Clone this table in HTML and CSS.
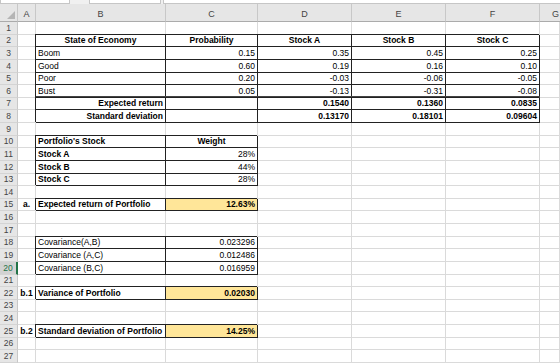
FILE: index.html
```html
<!DOCTYPE html>
<html>
<head>
<meta charset="utf-8">
<link rel="stylesheet" href="styles.css">
</head>
<body>
<div class="topbar">
  <div class="tb namebox"></div>
  <div class="tb fxbox"></div>
  <div class="tb formula"></div>
</div>
<div class="sheet">
  <div class="corner"><svg width="8" height="8" viewBox="0 0 8 8"><polygon points="8,0 8,8 0,8" fill="#b5b5b5"/></svg></div>
  <div class="ch">A</div><div class="ch">B</div><div class="ch">C</div><div class="ch">D</div><div class="ch">E</div><div class="ch">F</div><div class="ch gh">G</div>

  <div class="rh">1</div><div class="c"></div><div class="c"></div><div class="c"></div><div class="c"></div><div class="c"></div><div class="c"></div><div class="c"></div>

  <div class="rh">2</div><div class="c"></div><div class="c bx b ctr">State of Economy</div><div class="c bx b ctr">Probability</div><div class="c bx b ctr">Stock A</div><div class="c bx b ctr">Stock B</div><div class="c bx b ctr">Stock C</div><div class="c"></div>

  <div class="rh">3</div><div class="c"></div><div class="c bx">Boom</div><div class="c bx r">0.15</div><div class="c bx r">0.35</div><div class="c bx r">0.45</div><div class="c bx r">0.25</div><div class="c"></div>

  <div class="rh">4</div><div class="c"></div><div class="c bx">Good</div><div class="c bx r">0.60</div><div class="c bx r">0.19</div><div class="c bx r">0.16</div><div class="c bx r">0.10</div><div class="c"></div>

  <div class="rh">5</div><div class="c"></div><div class="c bx">Poor</div><div class="c bx r">0.20</div><div class="c bx r">-0.03</div><div class="c bx r">-0.06</div><div class="c bx r">-0.05</div><div class="c"></div>

  <div class="rh">6</div><div class="c"></div><div class="c bx">Bust</div><div class="c bx r">0.05</div><div class="c bx r">-0.13</div><div class="c bx r">-0.31</div><div class="c bx r">-0.08</div><div class="c"></div>

  <div class="rh">7</div><div class="c"></div><div class="c bx tk b r">Expected return</div><div class="c bx tk"></div><div class="c bx tk b r">0.1540</div><div class="c bx tk b r">0.1360</div><div class="c bx tk b r">0.0835</div><div class="c"></div>

  <div class="rh">8</div><div class="c"></div><div class="c bx b r">Standard deviation</div><div class="c bx"></div><div class="c bx b r">0.13170</div><div class="c bx b r">0.18101</div><div class="c bx b r">0.09604</div><div class="c"></div>

  <div class="rh">9</div><div class="c"></div><div class="c"></div><div class="c"></div><div class="c"></div><div class="c"></div><div class="c"></div><div class="c"></div>

  <div class="rh">10</div><div class="c"></div><div class="c bx b">Portfolio's Stock</div><div class="c bx b ctr">Weight</div><div class="c"></div><div class="c"></div><div class="c"></div><div class="c"></div>

  <div class="rh">11</div><div class="c"></div><div class="c bx b">Stock A</div><div class="c bx r">28%</div><div class="c"></div><div class="c"></div><div class="c"></div><div class="c"></div>

  <div class="rh">12</div><div class="c"></div><div class="c bx b">Stock B</div><div class="c bx r">44%</div><div class="c"></div><div class="c"></div><div class="c"></div><div class="c"></div>

  <div class="rh">13</div><div class="c"></div><div class="c bx b">Stock C</div><div class="c bx r">28%</div><div class="c"></div><div class="c"></div><div class="c"></div><div class="c"></div>

  <div class="rh">14</div><div class="c"></div><div class="c"></div><div class="c"></div><div class="c"></div><div class="c"></div><div class="c"></div><div class="c"></div>

  <div class="rh">15</div><div class="c b ctr">a.</div><div class="c bx b">Expected return of Portfolio</div><div class="c bx y b r">12.63%</div><div class="c"></div><div class="c"></div><div class="c"></div><div class="c"></div>

  <div class="rh">16</div><div class="c"></div><div class="c"></div><div class="c"></div><div class="c"></div><div class="c"></div><div class="c"></div><div class="c"></div>

  <div class="rh">17</div><div class="c"></div><div class="c"></div><div class="c"></div><div class="c"></div><div class="c"></div><div class="c"></div><div class="c"></div>

  <div class="rh">18</div><div class="c"></div><div class="c bx">Covariance(A,B)</div><div class="c bx r">0.023296</div><div class="c"></div><div class="c"></div><div class="c"></div><div class="c"></div>

  <div class="rh">19</div><div class="c"></div><div class="c bx">Covariance (A,C)</div><div class="c bx r">0.012486</div><div class="c"></div><div class="c"></div><div class="c"></div><div class="c"></div>

  <div class="rh sel">20</div><div class="c"></div><div class="c bx">Covariance (B,C)</div><div class="c bx r">0.016959</div><div class="c"></div><div class="c"></div><div class="c"></div><div class="c"></div>

  <div class="rh">21</div><div class="c"></div><div class="c"></div><div class="c"></div><div class="c"></div><div class="c"></div><div class="c"></div><div class="c"></div>

  <div class="rh">22</div><div class="c b ctr">b.1</div><div class="c bx b">Variance of Portfolio</div><div class="c bx y b r">0.02030</div><div class="c"></div><div class="c"></div><div class="c"></div><div class="c"></div>

  <div class="rh">23</div><div class="c"></div><div class="c"></div><div class="c"></div><div class="c"></div><div class="c"></div><div class="c"></div><div class="c"></div>

  <div class="rh">24</div><div class="c"></div><div class="c"></div><div class="c"></div><div class="c"></div><div class="c"></div><div class="c"></div><div class="c"></div>

  <div class="rh">25</div><div class="c b ctr">b.2</div><div class="c bx b">Standard deviation of Portfolio</div><div class="c bx y b r">14.25%</div><div class="c"></div><div class="c"></div><div class="c"></div><div class="c"></div>

  <div class="rh">26</div><div class="c"></div><div class="c"></div><div class="c"></div><div class="c"></div><div class="c"></div><div class="c"></div><div class="c"></div>

  <div class="rh">27</div><div class="c"></div><div class="c"></div><div class="c"></div><div class="c"></div><div class="c"></div><div class="c"></div><div class="c"></div>
</div>
</body>
</html>
```
FILE: styles.css
```css
* { box-sizing: border-box; }
html, body { margin: 0; padding: 0; background: #fff; }
body {
  font-family: "Liberation Sans", Arial, sans-serif;
  color: #000;
  width: 560px;
  height: 364px;
  overflow: hidden;
}
.topbar {
  height: 4px;
  background: #f0f0f0;
  display: flex;
}
.tb {
  height: 4px;
  background: #fff;
  border: 1px solid #c6c6c6;
  border-top: none;
}
.namebox { width: 70px; }
.fxbox { width: 72px; margin-left: 19px; }
.formula { flex: 1; margin-left: 2px; border-right: none; }

.sheet {
  display: grid;
  grid-template-columns: 18px 18px 130px 92px 94px 94px 94px 20px;
  grid-template-rows: 18px repeat(27, 12.64px);
  overflow: hidden;
}
.corner {
  background: #e6e6e6;
  border-right: 1px solid #c8c8c8;
  border-bottom: 1px solid #ababab;
  display: flex;
  align-items: flex-end;
  justify-content: flex-end;
  padding: 0 2px 2px 0;
}
.ch {
  background: #e6e6e6;
  border-right: 1px solid #c8c8c8;
  border-bottom: 1px solid #ababab;
  color: #444;
  font-size: 9px;
  display: flex;
  align-items: center;
  justify-content: center;
  padding-top: 2px;
}
.ch.gh { justify-content: flex-start; padding-left: 12px; border-right: none; }
.rh {
  background: #e6e6e6;
  border-right: 1px solid #c8c8c8;
  border-bottom: 1px solid #d4d4d4;
  color: #444;
  font-size: 8.5px;
  line-height: 10px;
  display: flex;
  align-items: flex-end;
  justify-content: center;
  padding-bottom: 1px;
}
.rh.sel {
  background: #d2d2d2;
  color: #217346;
  border-right: 2px solid #217346;
}
.c {
  border-right: 1px solid #dadada;
  border-bottom: 1px solid #dadada;
  font-size: 8.5px;
  line-height: 10px;
  display: flex;
  align-items: flex-end;
  padding: 0 2px 1px 2px;
  white-space: nowrap;
  overflow: visible;
}
.bx {
  border-right-color: #222;
  border-bottom-color: #222;
  box-shadow: -1px -1px 0 0 #222;
}
.bx.tk {
  box-shadow: -1px -1px 0 0 #222, 0 -2px 0 0 #444;
}
.b { font-weight: bold; }
.r { justify-content: flex-end; }
.ctr { justify-content: center; }
.y { background: #ffe699; }
```
